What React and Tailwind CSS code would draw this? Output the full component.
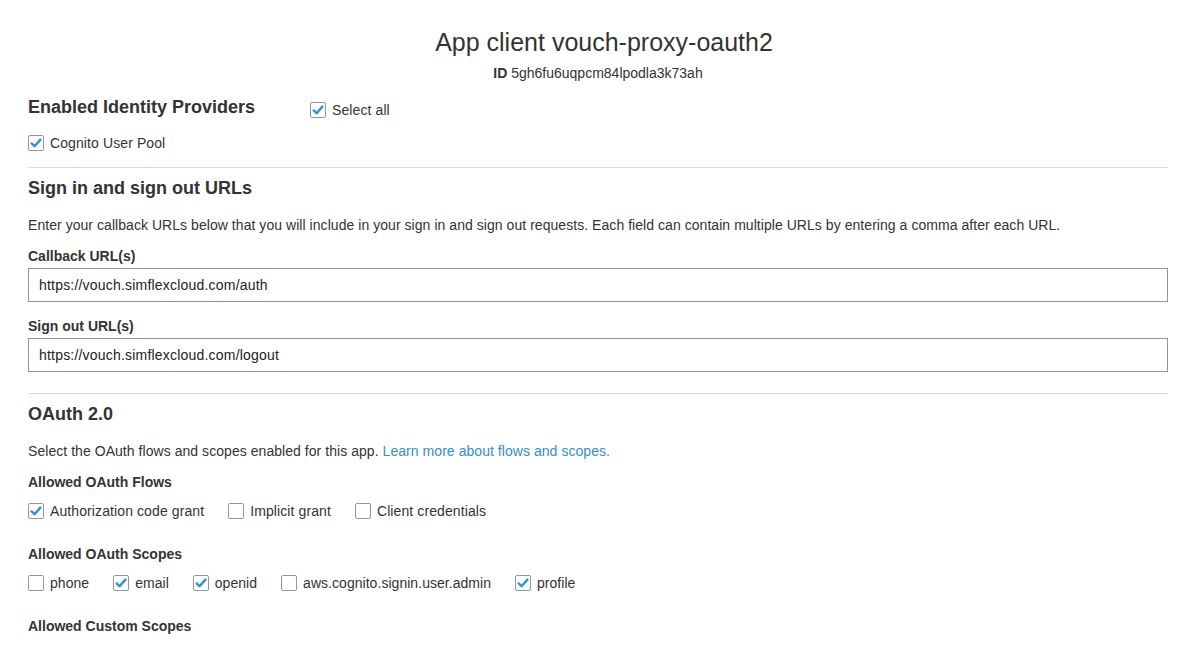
import React from "react";

function Box({ checked }) {
  return (
    <span className="inline-flex h-[16px] w-[16px] shrink-0 items-center justify-center rounded-[2px] border border-[#8d9a9b] bg-white">
      {checked && (
        <svg width="14" height="14" viewBox="0 0 14 14">
          <path d="M2.6 7.4 L5.6 10.2 L11.4 3.6" fill="none" stroke="#2f8fd8" strokeWidth="2.4" strokeLinecap="round" strokeLinejoin="round" />
        </svg>
      )}
    </span>
  );
}

function Check({ checked, label, className = "" }) {
  return (
    <label className={"flex h-[16px] items-center gap-[6px] text-[14px] leading-[16px] text-[#333] " + className}>
      <Box checked={checked} />
      <span>{label}</span>
    </label>
  );
}

export default function App() {
  return (
    <div className="min-h-[646px] bg-white pl-[28px] pr-[25px] text-[#333]" style={{ fontFamily: '"Liberation Sans", Arial, sans-serif' }}>
      <h1 className="pl-[12px] pt-[28px] text-center text-[25px] leading-[28px] font-normal text-[#333]">
        App client <span className="text-[#333]">vouch-proxy-oauth2</span>
      </h1>
      <div className="mt-[9px] text-center text-[14px] leading-[16px] text-[#333]">
        <span className="font-bold">ID</span> 5gh6fu6uqpcm84lpodla3k73ah
      </div>

      <div className="mt-[15px] flex h-[22px] items-center">
        <h2 className="w-[282px] text-[18px] leading-[22px] font-bold text-[#333]">Enabled Identity Providers</h2>
        <Check checked label="Select all" className="mt-[5px] tracking-[0.1px]" />
      </div>
      <Check checked label="Cognito User Pool" className="mt-[17px] tracking-[0.1px]" />

      <div className="mt-[16px] h-px bg-[#d5dbdb]" />

      <h2 className="mt-[9px] text-[18px] leading-[22px] font-bold text-[#333]">Sign in and sign out URLs</h2>
      <p className="mt-[17px] text-[14px] leading-[18px] tracking-[0.05px] text-[#333]">
        Enter your callback URLs below that you will include in your sign in and sign out requests. Each field can contain multiple URLs by entering a comma after each URL.
      </p>
      <div className="mt-[14px] text-[14px] leading-[16px] font-bold text-[#333]">Callback URL(s)</div>
      <div className="mt-[4px] flex h-[34px] items-center border border-[#8d9596] px-[10px] text-[14px] tracking-[0.2px] text-[#222]">
        https://vouch.simflexcloud.com/auth
      </div>
      <div className="mt-[16px] text-[14px] leading-[16px] font-bold text-[#333]">Sign out URL(s)</div>
      <div className="mt-[4px] flex h-[34px] items-center border border-[#8d9596] px-[10px] text-[14px] tracking-[0.2px] text-[#222]">
        https://vouch.simflexcloud.com/logout
      </div>

      <div className="mt-[21px] h-px bg-[#d5dbdb]" />

      <h2 className="mt-[9px] text-[18px] leading-[22px] font-bold text-[#333]">OAuth 2.0</h2>
      <p className="mt-[17px] text-[14px] leading-[18px] tracking-[0.05px] text-[#333]">
        Select the OAuth flows and scopes enabled for this app.{" "}
        <a className="text-[#2e8fd6]">Learn more about flows and scopes.</a>
      </p>
      <div className="mt-[14px] text-[14px] leading-[16px] font-bold text-[#333]">Allowed OAuth Flows</div>
      <div className="mt-[13px] flex gap-[24px] tracking-[0.1px]">
        <Check checked label="Authorization code grant" />
        <Check label="Implicit grant" />
        <Check label="Client credentials" />
      </div>
      <div className="mt-[27px] text-[14px] leading-[16px] font-bold text-[#333]">Allowed OAuth Scopes</div>
      <div className="mt-[13px] flex gap-[24px] tracking-[0.04px]">
        <Check label="phone" />
        <Check checked label="email" />
        <Check checked label="openid" />
        <Check label="aws.cognito.signin.user.admin" />
        <Check checked label="profile" />
      </div>
      <div className="mt-[27px] text-[14px] leading-[16px] font-bold text-[#333]">Allowed Custom Scopes</div>
    </div>
  );
}
